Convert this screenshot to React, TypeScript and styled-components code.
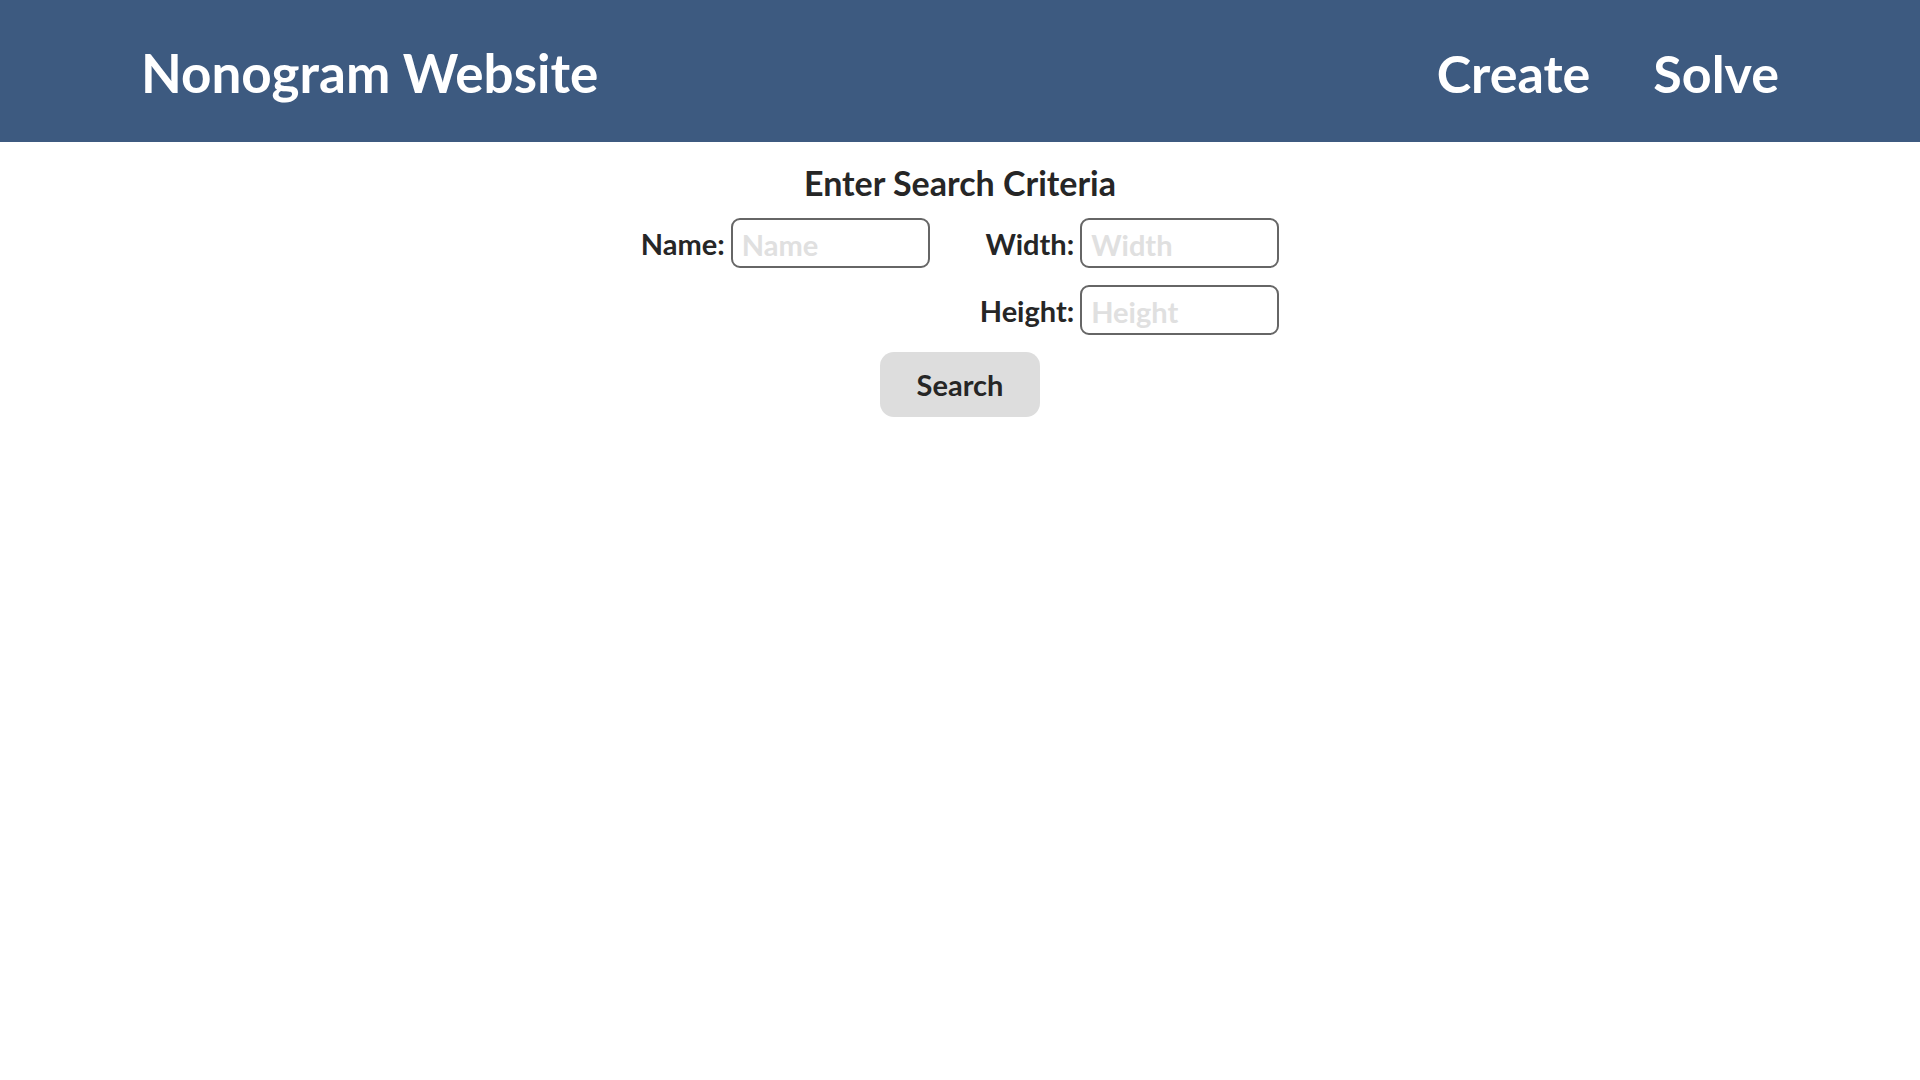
import React from "react";
import styled, { createGlobalStyle } from "styled-components";

const Global = createGlobalStyle`
  html, body { margin: 0; padding: 0; background: #ffffff; }
  body { font-family: Lato, "Open Sans", sans-serif; color: #262626; }
  * { box-sizing: border-box; }
`;

const Header = styled.header`
  height: 142px;
  background: #3d5a80;
  display: flex;
  align-items: center;
  justify-content: space-between;
  padding: 4px 141px 0 141px;
  color: #ffffff;
`;

const Title = styled.h1`
  margin: 0;
  font-size: 53px;
  line-height: 62px;
  font-weight: 700;
`;

const Nav = styled.nav`
  display: flex;
  gap: 63px;
`;

const NavLink = styled.a`
  color: #ffffff;
  text-decoration: none;
  font-size: 52px;
  line-height: 62px;
  font-weight: 700;
`;

const Main = styled.main`
  display: flex;
  flex-direction: column;
  align-items: center;
`;

const Heading = styled.h2`
  margin: 22px 0 16px;
  font-size: 34px;
  font-weight: 700;
  line-height: 38px;
`;

const Form = styled.form`
  display: grid;
  grid-template-columns: auto auto;
  column-gap: 50px;
  row-gap: 17px;
  justify-content: center;
`;

const Field = styled.div<{ $col: number; $row: number }>`
  grid-column: ${(p) => p.$col};
  grid-row: ${(p) => p.$row};
  justify-self: end;
  display: flex;
  align-items: center;
  gap: 6px;
`;

const Label = styled.label`
  font-size: 29px;
  font-weight: 700;
  white-space: nowrap;
`;

const Input = styled.input`
  height: 50px;
  width: 199px;
  border: 2px solid #666666;
  border-radius: 9px;
  padding: 2px 9px 0;
  font-family: inherit;
  font-size: 29px;
  font-weight: 700;
  color: #262626;
  background: #ffffff;
  outline: none;
  &::placeholder { color: #e0e0e0; }
`;

const SearchButton = styled.button`
  margin-top: 17px;
  width: 160px;
  height: 65px;
  border: none;
  border-radius: 14px;
  background: #dddddd;
  font-family: inherit;
  font-size: 29px;
  font-weight: 700;
  color: #262626;
  cursor: pointer;
`;

export default function App() {
  return (
    <>
      <Global />
      <Header>
        <Title>Nonogram Website</Title>
        <Nav>
          <NavLink href="#">Create</NavLink>
          <NavLink href="#">Solve</NavLink>
        </Nav>
      </Header>
      <Main>
        <Heading>Enter Search Criteria</Heading>
        <Form onSubmit={(e) => e.preventDefault()}>
          <Field $col={1} $row={1}>
            <Label htmlFor="name">Name:</Label>
            <Input id="name" placeholder="Name" />
          </Field>
          <Field $col={2} $row={1}>
            <Label htmlFor="width">Width:</Label>
            <Input id="width" placeholder="Width" />
          </Field>
          <Field $col={2} $row={2}>
            <Label htmlFor="height">Height:</Label>
            <Input id="height" placeholder="Height" />
          </Field>
        </Form>
        <SearchButton type="button">Search</SearchButton>
      </Main>
    </>
  );
}
